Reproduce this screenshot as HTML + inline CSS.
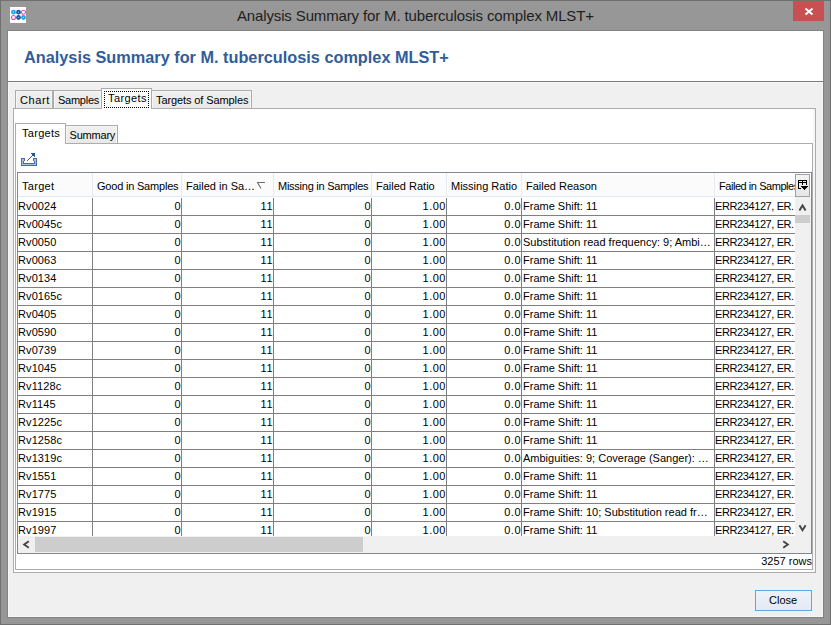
<!DOCTYPE html>
<html><head><meta charset="utf-8"><style>
html,body{margin:0;padding:0;width:831px;height:625px;overflow:hidden;background:#979797}
body{position:relative}
div,span,svg{position:absolute;display:block}
.t{font-family:"Liberation Sans",sans-serif;font-size:11px;color:#000;white-space:nowrap}
</style></head><body>
<div style="left:0px;top:0px;width:831px;height:625px;background:#979797"></div>
<div style="left:0px;top:0px;width:831px;height:1px;background:#707070"></div>
<div style="left:0px;top:0px;width:1px;height:625px;background:#707070"></div>
<div style="left:830px;top:0px;width:1px;height:625px;background:#707070"></div>
<div style="left:0px;top:624px;width:831px;height:1px;background:#707070"></div>
<div style="left:7px;top:30px;width:817px;height:588px;background:#838383"></div>
<div style="left:8px;top:31px;width:815px;height:586px;background:#f0f0f0"></div>
<div style="left:8px;top:31px;width:815px;height:50px;background:#ffffff"></div>
<div style="left:8px;top:81px;width:815px;height:1px;background:#7c7c7c"></div>
<div style="left:8px;top:82px;width:815px;height:1px;background:#f7f7f7"></div>
<div style="left:8px;top:82px;width:1px;height:535px;background:#f7f7f7"></div>
<div style="left:822px;top:82px;width:1px;height:535px;background:#f7f7f7"></div>
<div style="left:8px;top:616px;width:815px;height:1px;background:#f7f7f7"></div>
<svg style="left:10px;top:7px" width="16" height="16" viewBox="0 0 16 16"><rect width="16" height="16" fill="#fff"/><path d="M3.5 5.2 H13.5 M3.5 10.5 H13.5 M8.5 5.2 V10.5" stroke="#9fd3f0" stroke-width="0.6"/><circle cx="3.5" cy="5.2" r="2.4" fill="#1ea6ea"/><circle cx="8.5" cy="5.2" r="2.4" fill="#1b5ca6"/><circle cx="13.5" cy="5.2" r="2" fill="#fff" stroke="#ec4fa8" stroke-width="1.1"/><circle cx="3.5" cy="10.5" r="2" fill="#fff" stroke="#ec4fa8" stroke-width="1.1"/><circle cx="8.5" cy="10.5" r="2.4" fill="#1b5ca6"/><circle cx="13.5" cy="10.5" r="2.4" fill="#1ea6ea"/><circle cx="3.5" cy="5.2" r="0.6" fill="#bfe6fa"/><circle cx="8.5" cy="5.2" r="0.6" fill="#8fb0d8"/><circle cx="8.5" cy="10.5" r="0.6" fill="#8fb0d8"/><circle cx="13.5" cy="10.5" r="0.6" fill="#bfe6fa"/></svg>
<span class="t" style="left:237px;top:2.5px;font-size:15px;letter-spacing:-0.14px;line-height:26px;color:#1e1e1e">Analysis Summary for M. tuberculosis complex MLST+</span>
<div style="left:793px;top:1px;width:31px;height:20px;background:#c75050"></div>
<svg style="left:804px;top:7px" width="10" height="10" viewBox="0 0 10 10"><path d="M1.5 1.6 L8.5 7.5 M8.5 1.6 L1.5 7.5" stroke="#fff" stroke-width="2"/></svg>
<span class="t" style="left:24px;top:45px;font-size:16.3px;line-height:24px;font-weight:bold;color:#305d9b">Analysis Summary for M. tuberculosis complex MLST+</span>
<div style="left:13px;top:108px;width:803px;height:465px;background:#fff;border:1px solid #acacac;box-sizing:border-box"></div>
<div style="left:15px;top:90px;width:38px;height:19px;background:linear-gradient(#f0f0f0,#e8e8e8);border:1px solid #acacac;box-sizing:border-box;box-shadow:inset 1px 1px #f6f6f6,inset -1px 0 #f6f6f6"></div>
<div style="left:53px;top:90px;width:49px;height:19px;background:linear-gradient(#f0f0f0,#e8e8e8);border:1px solid #acacac;box-sizing:border-box;box-shadow:inset 1px 1px #f6f6f6,inset -1px 0 #f6f6f6"></div>
<div style="left:151px;top:90px;width:101px;height:19px;background:linear-gradient(#f0f0f0,#e8e8e8);border:1px solid #acacac;box-sizing:border-box;box-shadow:inset 1px 1px #f6f6f6,inset -1px 0 #f6f6f6"></div>
<div style="left:101px;top:88px;width:51px;height:21px;background:#fff;border:1px solid #acacac;border-bottom:none;box-sizing:border-box"></div>
<div style="left:104px;top:91px;width:45px;height:17px;border:1px dotted #000;box-sizing:border-box"></div>
<span class="t" style="left:20px;top:93px;line-height:14px;letter-spacing:0.6px">Chart</span>
<span class="t" style="left:58px;top:93px;line-height:14px;letter-spacing:-0.25px">Samples</span>
<span class="t" style="left:108px;top:91px;line-height:14px;letter-spacing:0.4px">Targets</span>
<span class="t" style="left:156px;top:93px;line-height:14px;letter-spacing:-0.1px">Targets of Samples</span>
<div style="left:813px;top:109px;width:2px;height:463px;background:#f6f6f6"></div>
<div style="left:15px;top:143px;width:798px;height:427px;background:#fff;border:1px solid #acacac;box-sizing:border-box"></div>
<div style="left:65px;top:125px;width:53px;height:19px;background:linear-gradient(#f0f0f0,#e8e8e8);border:1px solid #acacac;box-sizing:border-box;box-shadow:inset 1px 1px #f6f6f6,inset -1px 0 #f6f6f6"></div>
<div style="left:15px;top:123px;width:51px;height:21px;background:#fff;border:1px solid #acacac;border-bottom:none;box-sizing:border-box"></div>
<span class="t" style="left:22px;top:126px;line-height:14px;letter-spacing:0.3px">Targets</span>
<span class="t" style="left:69.5px;top:128px;line-height:14px;letter-spacing:-0.2px">Summary</span>
<svg style="left:21px;top:152px" width="16" height="14" viewBox="0 0 16 14" shape-rendering="crispEdges"><rect x="0" y="6" width="1" height="1" fill="#4b6ca6"/><rect x="1" y="6" width="1" height="1" fill="#4b6ca6"/><rect x="2" y="6" width="1" height="1" fill="#4b6ca6"/><rect x="3" y="6" width="1" height="1" fill="#4b6ca6"/><rect x="12" y="6" width="1" height="1" fill="#4b6ca6"/><rect x="13" y="6" width="1" height="1" fill="#4b6ca6"/><rect x="14" y="6" width="1" height="1" fill="#4b6ca6"/><rect x="15" y="6" width="1" height="1" fill="#4b6ca6"/><rect x="0" y="7" width="1" height="1" fill="#4b6ca6"/><rect x="1" y="7" width="1" height="1" fill="#a8bde2"/><rect x="2" y="7" width="1" height="1" fill="#a8bde2"/><rect x="3" y="7" width="1" height="1" fill="#4b6ca6"/><rect x="12" y="7" width="1" height="1" fill="#4b6ca6"/><rect x="13" y="7" width="1" height="1" fill="#a8bde2"/><rect x="14" y="7" width="1" height="1" fill="#a8bde2"/><rect x="15" y="7" width="1" height="1" fill="#4b6ca6"/><rect x="0" y="8" width="1" height="1" fill="#4b6ca6"/><rect x="1" y="8" width="1" height="1" fill="#a8bde2"/><rect x="2" y="8" width="1" height="1" fill="#a8bde2"/><rect x="3" y="8" width="1" height="1" fill="#4b6ca6"/><rect x="12" y="8" width="1" height="1" fill="#4b6ca6"/><rect x="13" y="8" width="1" height="1" fill="#a8bde2"/><rect x="14" y="8" width="1" height="1" fill="#a8bde2"/><rect x="15" y="8" width="1" height="1" fill="#4b6ca6"/><rect x="0" y="9" width="1" height="1" fill="#4b6ca6"/><rect x="1" y="9" width="1" height="1" fill="#a8bde2"/><rect x="2" y="9" width="1" height="1" fill="#4b6ca6"/><rect x="13" y="9" width="1" height="1" fill="#4b6ca6"/><rect x="14" y="9" width="1" height="1" fill="#a8bde2"/><rect x="15" y="9" width="1" height="1" fill="#4b6ca6"/><rect x="0" y="10" width="1" height="1" fill="#4b6ca6"/><rect x="1" y="10" width="1" height="1" fill="#a8bde2"/><rect x="2" y="10" width="1" height="1" fill="#4b6ca6"/><rect x="13" y="10" width="1" height="1" fill="#4b6ca6"/><rect x="14" y="10" width="1" height="1" fill="#a8bde2"/><rect x="15" y="10" width="1" height="1" fill="#4b6ca6"/><rect x="0" y="11" width="1" height="1" fill="#4b6ca6"/><rect x="1" y="11" width="1" height="1" fill="#a8bde2"/><rect x="2" y="11" width="1" height="1" fill="#4b6ca6"/><rect x="3" y="11" width="1" height="1" fill="#4b6ca6"/><rect x="4" y="11" width="1" height="1" fill="#4b6ca6"/><rect x="5" y="11" width="1" height="1" fill="#4b6ca6"/><rect x="6" y="11" width="1" height="1" fill="#4b6ca6"/><rect x="7" y="11" width="1" height="1" fill="#4b6ca6"/><rect x="8" y="11" width="1" height="1" fill="#4b6ca6"/><rect x="9" y="11" width="1" height="1" fill="#4b6ca6"/><rect x="10" y="11" width="1" height="1" fill="#4b6ca6"/><rect x="11" y="11" width="1" height="1" fill="#4b6ca6"/><rect x="12" y="11" width="1" height="1" fill="#4b6ca6"/><rect x="13" y="11" width="1" height="1" fill="#4b6ca6"/><rect x="14" y="11" width="1" height="1" fill="#a8bde2"/><rect x="15" y="11" width="1" height="1" fill="#4b6ca6"/><rect x="0" y="12" width="1" height="1" fill="#4b6ca6"/><rect x="1" y="12" width="1" height="1" fill="#a8bde2"/><rect x="2" y="12" width="1" height="1" fill="#a8bde2"/><rect x="3" y="12" width="1" height="1" fill="#a8bde2"/><rect x="4" y="12" width="1" height="1" fill="#a8bde2"/><rect x="5" y="12" width="1" height="1" fill="#a8bde2"/><rect x="6" y="12" width="1" height="1" fill="#a8bde2"/><rect x="7" y="12" width="1" height="1" fill="#a8bde2"/><rect x="8" y="12" width="1" height="1" fill="#a8bde2"/><rect x="9" y="12" width="1" height="1" fill="#a8bde2"/><rect x="10" y="12" width="1" height="1" fill="#a8bde2"/><rect x="11" y="12" width="1" height="1" fill="#a8bde2"/><rect x="12" y="12" width="1" height="1" fill="#a8bde2"/><rect x="13" y="12" width="1" height="1" fill="#a8bde2"/><rect x="14" y="12" width="1" height="1" fill="#a8bde2"/><rect x="15" y="12" width="1" height="1" fill="#4b6ca6"/><rect x="0" y="13" width="1" height="1" fill="#4b6ca6"/><rect x="1" y="13" width="1" height="1" fill="#4b6ca6"/><rect x="2" y="13" width="1" height="1" fill="#4b6ca6"/><rect x="3" y="13" width="1" height="1" fill="#4b6ca6"/><rect x="4" y="13" width="1" height="1" fill="#4b6ca6"/><rect x="5" y="13" width="1" height="1" fill="#4b6ca6"/><rect x="6" y="13" width="1" height="1" fill="#4b6ca6"/><rect x="7" y="13" width="1" height="1" fill="#4b6ca6"/><rect x="8" y="13" width="1" height="1" fill="#4b6ca6"/><rect x="9" y="13" width="1" height="1" fill="#4b6ca6"/><rect x="10" y="13" width="1" height="1" fill="#4b6ca6"/><rect x="11" y="13" width="1" height="1" fill="#4b6ca6"/><rect x="12" y="13" width="1" height="1" fill="#4b6ca6"/><rect x="13" y="13" width="1" height="1" fill="#4b6ca6"/><rect x="14" y="13" width="1" height="1" fill="#4b6ca6"/><rect x="15" y="13" width="1" height="1" fill="#4b6ca6"/><rect x="6" y="8" width="1" height="1" fill="#3d62b5"/><rect x="7" y="7" width="1" height="1" fill="#5a3db0"/><rect x="8" y="6" width="1" height="1" fill="#3d62b5"/><rect x="9" y="5" width="1" height="1" fill="#5a3db0"/><rect x="10" y="4" width="1" height="1" fill="#3d62b5"/><rect x="11" y="3" width="1" height="1" fill="#2a5aa8"/><rect x="10" y="1" width="1" height="1" fill="#1f5799"/><rect x="11" y="1" width="1" height="1" fill="#1f5799"/><rect x="12" y="1" width="1" height="1" fill="#1f5799"/><rect x="13" y="1" width="1" height="1" fill="#1f5799"/><rect x="11" y="2" width="1" height="1" fill="#1f5799"/><rect x="12" y="2" width="1" height="1" fill="#1f5799"/><rect x="13" y="2" width="1" height="1" fill="#1f5799"/><rect x="12" y="3" width="1" height="1" fill="#1f5799"/><rect x="13" y="3" width="1" height="1" fill="#1f5799"/><rect x="13" y="4" width="1" height="1" fill="#1f5799"/></svg>
<div style="left:17px;top:172px;width:795px;height:382px;background:#fff;border:1px solid #828790;box-sizing:border-box"></div>
<div style="left:18px;top:173px;width:777px;height:24px;background:linear-gradient(#ffffff 0px,#fcfcfc 2px,#fbfbfb 22px)"></div>
<div style="left:18px;top:196px;width:777px;height:1px;background:#e1e9f5"></div>
<div style="left:92px;top:173px;width:1px;height:23px;background:#e6ebf3"></div>
<div style="left:181px;top:173px;width:1px;height:23px;background:#e6ebf3"></div>
<div style="left:273px;top:173px;width:1px;height:23px;background:#e6ebf3"></div>
<div style="left:371px;top:173px;width:1px;height:23px;background:#e6ebf3"></div>
<div style="left:446px;top:173px;width:1px;height:23px;background:#e6ebf3"></div>
<div style="left:521px;top:173px;width:1px;height:23px;background:#e6ebf3"></div>
<div style="left:714px;top:173px;width:1px;height:23px;background:#e6ebf3"></div>
<div style="left:18px;top:173px;width:777px;height:23px;overflow:hidden">
<span class="t" style="left:4px;top:6px;line-height:14px;letter-spacing:0.3px">Target</span>
<span class="t" style="left:79px;top:6px;line-height:14px;letter-spacing:-0.2px">Good in Samples</span>
<span class="t" style="left:168px;top:6px;line-height:14px;letter-spacing:0px">Failed in Sa…</span>
<span class="t" style="left:260px;top:6px;line-height:14px;letter-spacing:-0.25px">Missing in Samples</span>
<span class="t" style="left:358px;top:6px;line-height:14px;letter-spacing:0px">Failed Ratio</span>
<span class="t" style="left:433px;top:6px;line-height:14px;letter-spacing:0px">Missing Ratio</span>
<span class="t" style="left:508px;top:6px;line-height:14px;letter-spacing:0px">Failed Reason</span>
<span class="t" style="left:701px;top:6px;line-height:14px;letter-spacing:-0.45px">Failed in Samples</span>
</div>
<svg style="left:256px;top:181px" width="10" height="9" viewBox="0 0 10 9"><path d="M1 1.5 H9 M1.5 1.5 L5 7.5" stroke="#6d6d6d" stroke-width="1.1" fill="none"/></svg>
<div style="left:795px;top:174px;width:15px;height:23px;background:linear-gradient(#f3f3f3,#e6e6e6);border:1px solid #a0a0a0;box-sizing:border-box"></div>
<svg style="left:798px;top:180px" width="10" height="10" viewBox="0 0 10 10" shape-rendering="crispEdges" fill="#000"><rect x="0" y="0" width="9" height="1"/><rect x="0" y="1" width="1" height="1"/><rect x="4" y="1" width="1" height="1"/><rect x="8" y="1" width="1" height="1"/><rect x="0" y="2" width="9" height="1"/><rect x="0" y="3" width="1" height="1"/><rect x="4" y="3" width="1" height="1"/><rect x="8" y="3" width="1" height="1"/><rect x="0" y="4" width="1" height="1"/><rect x="4" y="4" width="1" height="1"/><rect x="8" y="4" width="1" height="1"/><rect x="0" y="5" width="1" height="1"/><rect x="0" y="6" width="1" height="1"/><rect x="3" y="6" width="7" height="1"/><rect x="0" y="7" width="1" height="1"/><rect x="4" y="7" width="5" height="1"/><rect x="0" y="8" width="3" height="1"/><rect x="5" y="8" width="3" height="1"/><rect x="6" y="9" width="1" height="1"/></svg>
<div style="left:18px;top:197px;width:777px;height:339px;overflow:hidden">
<div style="left:0px;top:18px;width:777px;height:1px;background:#808080"></div>
<div style="left:74px;top:1px;width:1px;height:18px;background:#808080"></div>
<div style="left:163px;top:1px;width:1px;height:18px;background:#808080"></div>
<div style="left:255px;top:1px;width:1px;height:18px;background:#808080"></div>
<div style="left:353px;top:1px;width:1px;height:18px;background:#808080"></div>
<div style="left:428px;top:1px;width:1px;height:18px;background:#808080"></div>
<div style="left:503px;top:1px;width:1px;height:18px;background:#808080"></div>
<div style="left:696px;top:1px;width:1px;height:18px;background:#808080"></div>
<span class="t" style="left:0px;top:1px;line-height:17px;letter-spacing:0.1px">Rv0024</span>
<span class="t r" style="right:614px;top:1px;line-height:17px;letter-spacing:0.3px">0</span>
<span class="t r" style="right:522px;top:1px;line-height:17px;letter-spacing:0.5px">11</span>
<span class="t r" style="right:424px;top:1px;line-height:17px;letter-spacing:0.3px">0</span>
<span class="t r" style="right:349px;top:1px;line-height:17px;letter-spacing:0.5px">1.00</span>
<span class="t r" style="right:274px;top:1px;line-height:17px;letter-spacing:0.5px">0.0</span>
<span class="t" style="left:505px;top:1px;line-height:17px">Frame Shift: 11</span>
<span class="t" style="left:697px;top:1px;line-height:17px;letter-spacing:-0.4px">ERR234127, ER.</span>
<div style="left:0px;top:36px;width:777px;height:1px;background:#808080"></div>
<div style="left:74px;top:19px;width:1px;height:18px;background:#808080"></div>
<div style="left:163px;top:19px;width:1px;height:18px;background:#808080"></div>
<div style="left:255px;top:19px;width:1px;height:18px;background:#808080"></div>
<div style="left:353px;top:19px;width:1px;height:18px;background:#808080"></div>
<div style="left:428px;top:19px;width:1px;height:18px;background:#808080"></div>
<div style="left:503px;top:19px;width:1px;height:18px;background:#808080"></div>
<div style="left:696px;top:19px;width:1px;height:18px;background:#808080"></div>
<span class="t" style="left:0px;top:19px;line-height:17px;letter-spacing:0.1px">Rv0045c</span>
<span class="t r" style="right:614px;top:19px;line-height:17px;letter-spacing:0.3px">0</span>
<span class="t r" style="right:522px;top:19px;line-height:17px;letter-spacing:0.5px">11</span>
<span class="t r" style="right:424px;top:19px;line-height:17px;letter-spacing:0.3px">0</span>
<span class="t r" style="right:349px;top:19px;line-height:17px;letter-spacing:0.5px">1.00</span>
<span class="t r" style="right:274px;top:19px;line-height:17px;letter-spacing:0.5px">0.0</span>
<span class="t" style="left:505px;top:19px;line-height:17px">Frame Shift: 11</span>
<span class="t" style="left:697px;top:19px;line-height:17px;letter-spacing:-0.4px">ERR234127, ER.</span>
<div style="left:0px;top:54px;width:777px;height:1px;background:#808080"></div>
<div style="left:74px;top:37px;width:1px;height:18px;background:#808080"></div>
<div style="left:163px;top:37px;width:1px;height:18px;background:#808080"></div>
<div style="left:255px;top:37px;width:1px;height:18px;background:#808080"></div>
<div style="left:353px;top:37px;width:1px;height:18px;background:#808080"></div>
<div style="left:428px;top:37px;width:1px;height:18px;background:#808080"></div>
<div style="left:503px;top:37px;width:1px;height:18px;background:#808080"></div>
<div style="left:696px;top:37px;width:1px;height:18px;background:#808080"></div>
<span class="t" style="left:0px;top:37px;line-height:17px;letter-spacing:0.1px">Rv0050</span>
<span class="t r" style="right:614px;top:37px;line-height:17px;letter-spacing:0.3px">0</span>
<span class="t r" style="right:522px;top:37px;line-height:17px;letter-spacing:0.5px">11</span>
<span class="t r" style="right:424px;top:37px;line-height:17px;letter-spacing:0.3px">0</span>
<span class="t r" style="right:349px;top:37px;line-height:17px;letter-spacing:0.5px">1.00</span>
<span class="t r" style="right:274px;top:37px;line-height:17px;letter-spacing:0.5px">0.0</span>
<span class="t" style="left:505px;top:37px;line-height:17px">Substitution read frequency: 9; Ambi…</span>
<span class="t" style="left:697px;top:37px;line-height:17px;letter-spacing:-0.4px">ERR234127, ER.</span>
<div style="left:0px;top:72px;width:777px;height:1px;background:#808080"></div>
<div style="left:74px;top:55px;width:1px;height:18px;background:#808080"></div>
<div style="left:163px;top:55px;width:1px;height:18px;background:#808080"></div>
<div style="left:255px;top:55px;width:1px;height:18px;background:#808080"></div>
<div style="left:353px;top:55px;width:1px;height:18px;background:#808080"></div>
<div style="left:428px;top:55px;width:1px;height:18px;background:#808080"></div>
<div style="left:503px;top:55px;width:1px;height:18px;background:#808080"></div>
<div style="left:696px;top:55px;width:1px;height:18px;background:#808080"></div>
<span class="t" style="left:0px;top:55px;line-height:17px;letter-spacing:0.1px">Rv0063</span>
<span class="t r" style="right:614px;top:55px;line-height:17px;letter-spacing:0.3px">0</span>
<span class="t r" style="right:522px;top:55px;line-height:17px;letter-spacing:0.5px">11</span>
<span class="t r" style="right:424px;top:55px;line-height:17px;letter-spacing:0.3px">0</span>
<span class="t r" style="right:349px;top:55px;line-height:17px;letter-spacing:0.5px">1.00</span>
<span class="t r" style="right:274px;top:55px;line-height:17px;letter-spacing:0.5px">0.0</span>
<span class="t" style="left:505px;top:55px;line-height:17px">Frame Shift: 11</span>
<span class="t" style="left:697px;top:55px;line-height:17px;letter-spacing:-0.4px">ERR234127, ER.</span>
<div style="left:0px;top:90px;width:777px;height:1px;background:#808080"></div>
<div style="left:74px;top:73px;width:1px;height:18px;background:#808080"></div>
<div style="left:163px;top:73px;width:1px;height:18px;background:#808080"></div>
<div style="left:255px;top:73px;width:1px;height:18px;background:#808080"></div>
<div style="left:353px;top:73px;width:1px;height:18px;background:#808080"></div>
<div style="left:428px;top:73px;width:1px;height:18px;background:#808080"></div>
<div style="left:503px;top:73px;width:1px;height:18px;background:#808080"></div>
<div style="left:696px;top:73px;width:1px;height:18px;background:#808080"></div>
<span class="t" style="left:0px;top:73px;line-height:17px;letter-spacing:0.1px">Rv0134</span>
<span class="t r" style="right:614px;top:73px;line-height:17px;letter-spacing:0.3px">0</span>
<span class="t r" style="right:522px;top:73px;line-height:17px;letter-spacing:0.5px">11</span>
<span class="t r" style="right:424px;top:73px;line-height:17px;letter-spacing:0.3px">0</span>
<span class="t r" style="right:349px;top:73px;line-height:17px;letter-spacing:0.5px">1.00</span>
<span class="t r" style="right:274px;top:73px;line-height:17px;letter-spacing:0.5px">0.0</span>
<span class="t" style="left:505px;top:73px;line-height:17px">Frame Shift: 11</span>
<span class="t" style="left:697px;top:73px;line-height:17px;letter-spacing:-0.4px">ERR234127, ER.</span>
<div style="left:0px;top:108px;width:777px;height:1px;background:#808080"></div>
<div style="left:74px;top:91px;width:1px;height:18px;background:#808080"></div>
<div style="left:163px;top:91px;width:1px;height:18px;background:#808080"></div>
<div style="left:255px;top:91px;width:1px;height:18px;background:#808080"></div>
<div style="left:353px;top:91px;width:1px;height:18px;background:#808080"></div>
<div style="left:428px;top:91px;width:1px;height:18px;background:#808080"></div>
<div style="left:503px;top:91px;width:1px;height:18px;background:#808080"></div>
<div style="left:696px;top:91px;width:1px;height:18px;background:#808080"></div>
<span class="t" style="left:0px;top:91px;line-height:17px;letter-spacing:0.1px">Rv0165c</span>
<span class="t r" style="right:614px;top:91px;line-height:17px;letter-spacing:0.3px">0</span>
<span class="t r" style="right:522px;top:91px;line-height:17px;letter-spacing:0.5px">11</span>
<span class="t r" style="right:424px;top:91px;line-height:17px;letter-spacing:0.3px">0</span>
<span class="t r" style="right:349px;top:91px;line-height:17px;letter-spacing:0.5px">1.00</span>
<span class="t r" style="right:274px;top:91px;line-height:17px;letter-spacing:0.5px">0.0</span>
<span class="t" style="left:505px;top:91px;line-height:17px">Frame Shift: 11</span>
<span class="t" style="left:697px;top:91px;line-height:17px;letter-spacing:-0.4px">ERR234127, ER.</span>
<div style="left:0px;top:126px;width:777px;height:1px;background:#808080"></div>
<div style="left:74px;top:109px;width:1px;height:18px;background:#808080"></div>
<div style="left:163px;top:109px;width:1px;height:18px;background:#808080"></div>
<div style="left:255px;top:109px;width:1px;height:18px;background:#808080"></div>
<div style="left:353px;top:109px;width:1px;height:18px;background:#808080"></div>
<div style="left:428px;top:109px;width:1px;height:18px;background:#808080"></div>
<div style="left:503px;top:109px;width:1px;height:18px;background:#808080"></div>
<div style="left:696px;top:109px;width:1px;height:18px;background:#808080"></div>
<span class="t" style="left:0px;top:109px;line-height:17px;letter-spacing:0.1px">Rv0405</span>
<span class="t r" style="right:614px;top:109px;line-height:17px;letter-spacing:0.3px">0</span>
<span class="t r" style="right:522px;top:109px;line-height:17px;letter-spacing:0.5px">11</span>
<span class="t r" style="right:424px;top:109px;line-height:17px;letter-spacing:0.3px">0</span>
<span class="t r" style="right:349px;top:109px;line-height:17px;letter-spacing:0.5px">1.00</span>
<span class="t r" style="right:274px;top:109px;line-height:17px;letter-spacing:0.5px">0.0</span>
<span class="t" style="left:505px;top:109px;line-height:17px">Frame Shift: 11</span>
<span class="t" style="left:697px;top:109px;line-height:17px;letter-spacing:-0.4px">ERR234127, ER.</span>
<div style="left:0px;top:144px;width:777px;height:1px;background:#808080"></div>
<div style="left:74px;top:127px;width:1px;height:18px;background:#808080"></div>
<div style="left:163px;top:127px;width:1px;height:18px;background:#808080"></div>
<div style="left:255px;top:127px;width:1px;height:18px;background:#808080"></div>
<div style="left:353px;top:127px;width:1px;height:18px;background:#808080"></div>
<div style="left:428px;top:127px;width:1px;height:18px;background:#808080"></div>
<div style="left:503px;top:127px;width:1px;height:18px;background:#808080"></div>
<div style="left:696px;top:127px;width:1px;height:18px;background:#808080"></div>
<span class="t" style="left:0px;top:127px;line-height:17px;letter-spacing:0.1px">Rv0590</span>
<span class="t r" style="right:614px;top:127px;line-height:17px;letter-spacing:0.3px">0</span>
<span class="t r" style="right:522px;top:127px;line-height:17px;letter-spacing:0.5px">11</span>
<span class="t r" style="right:424px;top:127px;line-height:17px;letter-spacing:0.3px">0</span>
<span class="t r" style="right:349px;top:127px;line-height:17px;letter-spacing:0.5px">1.00</span>
<span class="t r" style="right:274px;top:127px;line-height:17px;letter-spacing:0.5px">0.0</span>
<span class="t" style="left:505px;top:127px;line-height:17px">Frame Shift: 11</span>
<span class="t" style="left:697px;top:127px;line-height:17px;letter-spacing:-0.4px">ERR234127, ER.</span>
<div style="left:0px;top:162px;width:777px;height:1px;background:#808080"></div>
<div style="left:74px;top:145px;width:1px;height:18px;background:#808080"></div>
<div style="left:163px;top:145px;width:1px;height:18px;background:#808080"></div>
<div style="left:255px;top:145px;width:1px;height:18px;background:#808080"></div>
<div style="left:353px;top:145px;width:1px;height:18px;background:#808080"></div>
<div style="left:428px;top:145px;width:1px;height:18px;background:#808080"></div>
<div style="left:503px;top:145px;width:1px;height:18px;background:#808080"></div>
<div style="left:696px;top:145px;width:1px;height:18px;background:#808080"></div>
<span class="t" style="left:0px;top:145px;line-height:17px;letter-spacing:0.1px">Rv0739</span>
<span class="t r" style="right:614px;top:145px;line-height:17px;letter-spacing:0.3px">0</span>
<span class="t r" style="right:522px;top:145px;line-height:17px;letter-spacing:0.5px">11</span>
<span class="t r" style="right:424px;top:145px;line-height:17px;letter-spacing:0.3px">0</span>
<span class="t r" style="right:349px;top:145px;line-height:17px;letter-spacing:0.5px">1.00</span>
<span class="t r" style="right:274px;top:145px;line-height:17px;letter-spacing:0.5px">0.0</span>
<span class="t" style="left:505px;top:145px;line-height:17px">Frame Shift: 11</span>
<span class="t" style="left:697px;top:145px;line-height:17px;letter-spacing:-0.4px">ERR234127, ER.</span>
<div style="left:0px;top:180px;width:777px;height:1px;background:#808080"></div>
<div style="left:74px;top:163px;width:1px;height:18px;background:#808080"></div>
<div style="left:163px;top:163px;width:1px;height:18px;background:#808080"></div>
<div style="left:255px;top:163px;width:1px;height:18px;background:#808080"></div>
<div style="left:353px;top:163px;width:1px;height:18px;background:#808080"></div>
<div style="left:428px;top:163px;width:1px;height:18px;background:#808080"></div>
<div style="left:503px;top:163px;width:1px;height:18px;background:#808080"></div>
<div style="left:696px;top:163px;width:1px;height:18px;background:#808080"></div>
<span class="t" style="left:0px;top:163px;line-height:17px;letter-spacing:0.1px">Rv1045</span>
<span class="t r" style="right:614px;top:163px;line-height:17px;letter-spacing:0.3px">0</span>
<span class="t r" style="right:522px;top:163px;line-height:17px;letter-spacing:0.5px">11</span>
<span class="t r" style="right:424px;top:163px;line-height:17px;letter-spacing:0.3px">0</span>
<span class="t r" style="right:349px;top:163px;line-height:17px;letter-spacing:0.5px">1.00</span>
<span class="t r" style="right:274px;top:163px;line-height:17px;letter-spacing:0.5px">0.0</span>
<span class="t" style="left:505px;top:163px;line-height:17px">Frame Shift: 11</span>
<span class="t" style="left:697px;top:163px;line-height:17px;letter-spacing:-0.4px">ERR234127, ER.</span>
<div style="left:0px;top:198px;width:777px;height:1px;background:#808080"></div>
<div style="left:74px;top:181px;width:1px;height:18px;background:#808080"></div>
<div style="left:163px;top:181px;width:1px;height:18px;background:#808080"></div>
<div style="left:255px;top:181px;width:1px;height:18px;background:#808080"></div>
<div style="left:353px;top:181px;width:1px;height:18px;background:#808080"></div>
<div style="left:428px;top:181px;width:1px;height:18px;background:#808080"></div>
<div style="left:503px;top:181px;width:1px;height:18px;background:#808080"></div>
<div style="left:696px;top:181px;width:1px;height:18px;background:#808080"></div>
<span class="t" style="left:0px;top:181px;line-height:17px;letter-spacing:0.1px">Rv1128c</span>
<span class="t r" style="right:614px;top:181px;line-height:17px;letter-spacing:0.3px">0</span>
<span class="t r" style="right:522px;top:181px;line-height:17px;letter-spacing:0.5px">11</span>
<span class="t r" style="right:424px;top:181px;line-height:17px;letter-spacing:0.3px">0</span>
<span class="t r" style="right:349px;top:181px;line-height:17px;letter-spacing:0.5px">1.00</span>
<span class="t r" style="right:274px;top:181px;line-height:17px;letter-spacing:0.5px">0.0</span>
<span class="t" style="left:505px;top:181px;line-height:17px">Frame Shift: 11</span>
<span class="t" style="left:697px;top:181px;line-height:17px;letter-spacing:-0.4px">ERR234127, ER.</span>
<div style="left:0px;top:216px;width:777px;height:1px;background:#808080"></div>
<div style="left:74px;top:199px;width:1px;height:18px;background:#808080"></div>
<div style="left:163px;top:199px;width:1px;height:18px;background:#808080"></div>
<div style="left:255px;top:199px;width:1px;height:18px;background:#808080"></div>
<div style="left:353px;top:199px;width:1px;height:18px;background:#808080"></div>
<div style="left:428px;top:199px;width:1px;height:18px;background:#808080"></div>
<div style="left:503px;top:199px;width:1px;height:18px;background:#808080"></div>
<div style="left:696px;top:199px;width:1px;height:18px;background:#808080"></div>
<span class="t" style="left:0px;top:199px;line-height:17px;letter-spacing:0.1px">Rv1145</span>
<span class="t r" style="right:614px;top:199px;line-height:17px;letter-spacing:0.3px">0</span>
<span class="t r" style="right:522px;top:199px;line-height:17px;letter-spacing:0.5px">11</span>
<span class="t r" style="right:424px;top:199px;line-height:17px;letter-spacing:0.3px">0</span>
<span class="t r" style="right:349px;top:199px;line-height:17px;letter-spacing:0.5px">1.00</span>
<span class="t r" style="right:274px;top:199px;line-height:17px;letter-spacing:0.5px">0.0</span>
<span class="t" style="left:505px;top:199px;line-height:17px">Frame Shift: 11</span>
<span class="t" style="left:697px;top:199px;line-height:17px;letter-spacing:-0.4px">ERR234127, ER.</span>
<div style="left:0px;top:234px;width:777px;height:1px;background:#808080"></div>
<div style="left:74px;top:217px;width:1px;height:18px;background:#808080"></div>
<div style="left:163px;top:217px;width:1px;height:18px;background:#808080"></div>
<div style="left:255px;top:217px;width:1px;height:18px;background:#808080"></div>
<div style="left:353px;top:217px;width:1px;height:18px;background:#808080"></div>
<div style="left:428px;top:217px;width:1px;height:18px;background:#808080"></div>
<div style="left:503px;top:217px;width:1px;height:18px;background:#808080"></div>
<div style="left:696px;top:217px;width:1px;height:18px;background:#808080"></div>
<span class="t" style="left:0px;top:217px;line-height:17px;letter-spacing:0.1px">Rv1225c</span>
<span class="t r" style="right:614px;top:217px;line-height:17px;letter-spacing:0.3px">0</span>
<span class="t r" style="right:522px;top:217px;line-height:17px;letter-spacing:0.5px">11</span>
<span class="t r" style="right:424px;top:217px;line-height:17px;letter-spacing:0.3px">0</span>
<span class="t r" style="right:349px;top:217px;line-height:17px;letter-spacing:0.5px">1.00</span>
<span class="t r" style="right:274px;top:217px;line-height:17px;letter-spacing:0.5px">0.0</span>
<span class="t" style="left:505px;top:217px;line-height:17px">Frame Shift: 11</span>
<span class="t" style="left:697px;top:217px;line-height:17px;letter-spacing:-0.4px">ERR234127, ER.</span>
<div style="left:0px;top:252px;width:777px;height:1px;background:#808080"></div>
<div style="left:74px;top:235px;width:1px;height:18px;background:#808080"></div>
<div style="left:163px;top:235px;width:1px;height:18px;background:#808080"></div>
<div style="left:255px;top:235px;width:1px;height:18px;background:#808080"></div>
<div style="left:353px;top:235px;width:1px;height:18px;background:#808080"></div>
<div style="left:428px;top:235px;width:1px;height:18px;background:#808080"></div>
<div style="left:503px;top:235px;width:1px;height:18px;background:#808080"></div>
<div style="left:696px;top:235px;width:1px;height:18px;background:#808080"></div>
<span class="t" style="left:0px;top:235px;line-height:17px;letter-spacing:0.1px">Rv1258c</span>
<span class="t r" style="right:614px;top:235px;line-height:17px;letter-spacing:0.3px">0</span>
<span class="t r" style="right:522px;top:235px;line-height:17px;letter-spacing:0.5px">11</span>
<span class="t r" style="right:424px;top:235px;line-height:17px;letter-spacing:0.3px">0</span>
<span class="t r" style="right:349px;top:235px;line-height:17px;letter-spacing:0.5px">1.00</span>
<span class="t r" style="right:274px;top:235px;line-height:17px;letter-spacing:0.5px">0.0</span>
<span class="t" style="left:505px;top:235px;line-height:17px">Frame Shift: 11</span>
<span class="t" style="left:697px;top:235px;line-height:17px;letter-spacing:-0.4px">ERR234127, ER.</span>
<div style="left:0px;top:270px;width:777px;height:1px;background:#808080"></div>
<div style="left:74px;top:253px;width:1px;height:18px;background:#808080"></div>
<div style="left:163px;top:253px;width:1px;height:18px;background:#808080"></div>
<div style="left:255px;top:253px;width:1px;height:18px;background:#808080"></div>
<div style="left:353px;top:253px;width:1px;height:18px;background:#808080"></div>
<div style="left:428px;top:253px;width:1px;height:18px;background:#808080"></div>
<div style="left:503px;top:253px;width:1px;height:18px;background:#808080"></div>
<div style="left:696px;top:253px;width:1px;height:18px;background:#808080"></div>
<span class="t" style="left:0px;top:253px;line-height:17px;letter-spacing:0.1px">Rv1319c</span>
<span class="t r" style="right:614px;top:253px;line-height:17px;letter-spacing:0.3px">0</span>
<span class="t r" style="right:522px;top:253px;line-height:17px;letter-spacing:0.5px">11</span>
<span class="t r" style="right:424px;top:253px;line-height:17px;letter-spacing:0.3px">0</span>
<span class="t r" style="right:349px;top:253px;line-height:17px;letter-spacing:0.5px">1.00</span>
<span class="t r" style="right:274px;top:253px;line-height:17px;letter-spacing:0.5px">0.0</span>
<span class="t" style="left:505px;top:253px;line-height:17px">Ambiguities: 9; Coverage (Sanger): …</span>
<span class="t" style="left:697px;top:253px;line-height:17px;letter-spacing:-0.4px">ERR234127, ER.</span>
<div style="left:0px;top:288px;width:777px;height:1px;background:#808080"></div>
<div style="left:74px;top:271px;width:1px;height:18px;background:#808080"></div>
<div style="left:163px;top:271px;width:1px;height:18px;background:#808080"></div>
<div style="left:255px;top:271px;width:1px;height:18px;background:#808080"></div>
<div style="left:353px;top:271px;width:1px;height:18px;background:#808080"></div>
<div style="left:428px;top:271px;width:1px;height:18px;background:#808080"></div>
<div style="left:503px;top:271px;width:1px;height:18px;background:#808080"></div>
<div style="left:696px;top:271px;width:1px;height:18px;background:#808080"></div>
<span class="t" style="left:0px;top:271px;line-height:17px;letter-spacing:0.1px">Rv1551</span>
<span class="t r" style="right:614px;top:271px;line-height:17px;letter-spacing:0.3px">0</span>
<span class="t r" style="right:522px;top:271px;line-height:17px;letter-spacing:0.5px">11</span>
<span class="t r" style="right:424px;top:271px;line-height:17px;letter-spacing:0.3px">0</span>
<span class="t r" style="right:349px;top:271px;line-height:17px;letter-spacing:0.5px">1.00</span>
<span class="t r" style="right:274px;top:271px;line-height:17px;letter-spacing:0.5px">0.0</span>
<span class="t" style="left:505px;top:271px;line-height:17px">Frame Shift: 11</span>
<span class="t" style="left:697px;top:271px;line-height:17px;letter-spacing:-0.4px">ERR234127, ER.</span>
<div style="left:0px;top:306px;width:777px;height:1px;background:#808080"></div>
<div style="left:74px;top:289px;width:1px;height:18px;background:#808080"></div>
<div style="left:163px;top:289px;width:1px;height:18px;background:#808080"></div>
<div style="left:255px;top:289px;width:1px;height:18px;background:#808080"></div>
<div style="left:353px;top:289px;width:1px;height:18px;background:#808080"></div>
<div style="left:428px;top:289px;width:1px;height:18px;background:#808080"></div>
<div style="left:503px;top:289px;width:1px;height:18px;background:#808080"></div>
<div style="left:696px;top:289px;width:1px;height:18px;background:#808080"></div>
<span class="t" style="left:0px;top:289px;line-height:17px;letter-spacing:0.1px">Rv1775</span>
<span class="t r" style="right:614px;top:289px;line-height:17px;letter-spacing:0.3px">0</span>
<span class="t r" style="right:522px;top:289px;line-height:17px;letter-spacing:0.5px">11</span>
<span class="t r" style="right:424px;top:289px;line-height:17px;letter-spacing:0.3px">0</span>
<span class="t r" style="right:349px;top:289px;line-height:17px;letter-spacing:0.5px">1.00</span>
<span class="t r" style="right:274px;top:289px;line-height:17px;letter-spacing:0.5px">0.0</span>
<span class="t" style="left:505px;top:289px;line-height:17px">Frame Shift: 11</span>
<span class="t" style="left:697px;top:289px;line-height:17px;letter-spacing:-0.4px">ERR234127, ER.</span>
<div style="left:0px;top:324px;width:777px;height:1px;background:#808080"></div>
<div style="left:74px;top:307px;width:1px;height:18px;background:#808080"></div>
<div style="left:163px;top:307px;width:1px;height:18px;background:#808080"></div>
<div style="left:255px;top:307px;width:1px;height:18px;background:#808080"></div>
<div style="left:353px;top:307px;width:1px;height:18px;background:#808080"></div>
<div style="left:428px;top:307px;width:1px;height:18px;background:#808080"></div>
<div style="left:503px;top:307px;width:1px;height:18px;background:#808080"></div>
<div style="left:696px;top:307px;width:1px;height:18px;background:#808080"></div>
<span class="t" style="left:0px;top:307px;line-height:17px;letter-spacing:0.1px">Rv1915</span>
<span class="t r" style="right:614px;top:307px;line-height:17px;letter-spacing:0.3px">0</span>
<span class="t r" style="right:522px;top:307px;line-height:17px;letter-spacing:0.5px">11</span>
<span class="t r" style="right:424px;top:307px;line-height:17px;letter-spacing:0.3px">0</span>
<span class="t r" style="right:349px;top:307px;line-height:17px;letter-spacing:0.5px">1.00</span>
<span class="t r" style="right:274px;top:307px;line-height:17px;letter-spacing:0.5px">0.0</span>
<span class="t" style="left:505px;top:307px;line-height:17px">Frame Shift: 10; Substitution read fr…</span>
<span class="t" style="left:697px;top:307px;line-height:17px;letter-spacing:-0.4px">ERR234127, ER.</span>
<div style="left:0px;top:342px;width:777px;height:1px;background:#808080"></div>
<div style="left:74px;top:325px;width:1px;height:18px;background:#808080"></div>
<div style="left:163px;top:325px;width:1px;height:18px;background:#808080"></div>
<div style="left:255px;top:325px;width:1px;height:18px;background:#808080"></div>
<div style="left:353px;top:325px;width:1px;height:18px;background:#808080"></div>
<div style="left:428px;top:325px;width:1px;height:18px;background:#808080"></div>
<div style="left:503px;top:325px;width:1px;height:18px;background:#808080"></div>
<div style="left:696px;top:325px;width:1px;height:18px;background:#808080"></div>
<span class="t" style="left:0px;top:325px;line-height:17px;letter-spacing:0.1px">Rv1997</span>
<span class="t r" style="right:614px;top:325px;line-height:17px;letter-spacing:0.3px">0</span>
<span class="t r" style="right:522px;top:325px;line-height:17px;letter-spacing:0.5px">11</span>
<span class="t r" style="right:424px;top:325px;line-height:17px;letter-spacing:0.3px">0</span>
<span class="t r" style="right:349px;top:325px;line-height:17px;letter-spacing:0.5px">1.00</span>
<span class="t r" style="right:274px;top:325px;line-height:17px;letter-spacing:0.5px">0.0</span>
<span class="t" style="left:505px;top:325px;line-height:17px">Frame Shift: 11</span>
<span class="t" style="left:697px;top:325px;line-height:17px;letter-spacing:-0.4px">ERR234127, ER.</span>
</div>
<div style="left:795px;top:197px;width:16px;height:356px;background:#f0f0f0"></div>
<svg style="left:796px;top:200px" width="14" height="14" viewBox="0 0 14 14"><path d="M3.4 10.4 L6.5 5.4 L9.6 10.4" stroke="#454545" stroke-width="1.9" fill="none" stroke-linejoin="miter"/></svg>
<div style="left:795px;top:215px;width:15px;height:8px;background:#cdcdcd"></div>
<svg style="left:796px;top:522px" width="14" height="14" viewBox="0 0 14 14"><path d="M3.4 3.2 L6.5 8.2 L9.6 3.2" stroke="#454545" stroke-width="1.9" fill="none" stroke-linejoin="miter"/></svg>
<div style="left:18px;top:536px;width:793px;height:17px;background:#f0f0f0"></div>
<div style="left:35px;top:537px;width:328px;height:15px;background:#cdcdcd"></div>
<svg style="left:18px;top:537px" width="16" height="15" viewBox="0 0 16 15"><path d="M10.8 4.3 L6.2 7.5 L10.8 10.7" stroke="#454545" stroke-width="1.9" fill="none" stroke-linejoin="miter"/></svg>
<svg style="left:778px;top:537px" width="16" height="15" viewBox="0 0 16 15"><path d="M5.2 4.3 L9.8 7.5 L5.2 10.7" stroke="#454545" stroke-width="1.9" fill="none" stroke-linejoin="miter"/></svg>
<span class="t r" style="right:19px;top:554px;line-height:14px">3257 rows</span>
<div style="left:755px;top:590px;width:57px;height:21px;background:linear-gradient(#edf2f9,#e2eaf5);border:1px solid #62a4ea;box-sizing:border-box"></div>
<span class="t" style="left:769px;top:593px;line-height:14px">Close</span>
</body></html>
